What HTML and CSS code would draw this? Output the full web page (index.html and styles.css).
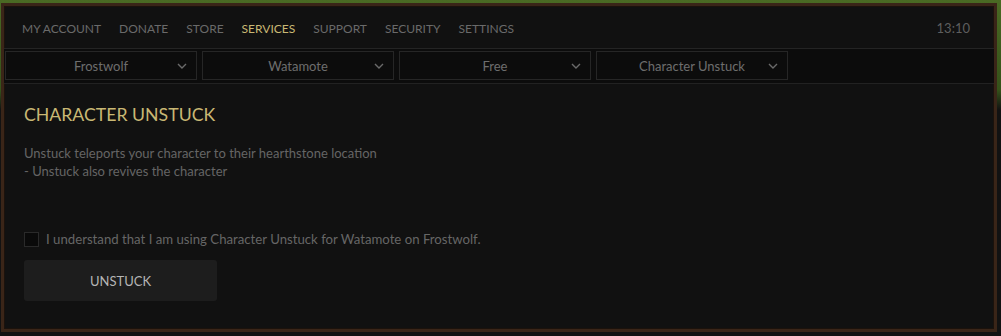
FILE: index.html
```html
<!DOCTYPE html>
<html lang="en">
<head>
    <meta charset="UTF-8">
    <title>Services - Character Unstuck</title>
    <link rel="stylesheet" href="styles.css">
</head>
<body>

<div class="frame">
    <header class="topbar">
        <nav class="menu">
            <a href="#">My Account</a>
            <a href="#">Donate</a>
            <a href="#">Store</a>
            <a href="#" class="active">Services</a>
            <a href="#">Support</a>
            <a href="#">Security</a>
            <a href="#">Settings</a>
        </nav>
        <span class="clock">13:10</span>
    </header>

    <div class="filters">
        <div class="select">Frostwolf <svg viewBox="0 0 10 6"><path d="M1 1l4 4 4-4"/></svg></div>
        <div class="select">Watamote <svg viewBox="0 0 10 6"><path d="M1 1l4 4 4-4"/></svg></div>
        <div class="select">Free <svg viewBox="0 0 10 6"><path d="M1 1l4 4 4-4"/></svg></div>
        <div class="select">Character Unstuck <svg viewBox="0 0 10 6"><path d="M1 1l4 4 4-4"/></svg></div>
    </div>

    <main class="content">
        <h2>Character Unstuck</h2>
        <p class="desc">
            Unstuck teleports your character to their hearthstone location<br>
            - Unstuck also revives the character
        </p>

        <label class="confirm">
            <span class="box"></span>
            I understand that I am using Character Unstuck for Watamote on Frostwolf.
        </label>

        <button type="button">Unstuck</button>
    </main>
</div>

</body>
</html>
```

FILE: styles.css
```css
body {
    margin: 0;
    height: 336px;
    overflow: hidden;
    font-family: 'Lato', sans-serif;
    background: linear-gradient(to bottom, #4a6a24 0, #35521a 90px, #121212 110px);
}

.frame {
    margin: 3px 4px 0 1px;
    height: 323px;
    background-color: #111111;
    border: 3px solid #3a2518;
    box-shadow: inset 0 0 0 1px #1b120c;
    display: flex;
    flex-direction: column;
}

.topbar {
    height: 43px;
    display: flex;
    align-items: center;
    justify-content: space-between;
    padding: 2px 24px 0 18px;
    box-sizing: border-box;
    border-bottom: 1px solid #242424;
}

.menu {
    display: flex;
    gap: 18px;
}

.menu a {
    color: #6a6a6a;
    text-decoration: none;
    text-transform: uppercase;
    font-size: 12px;
}

.menu a.active {
    color: #c9b874;
}

.clock {
    color: #5e5e5e;
    font-size: 13px;
}

.filters {
    display: flex;
    gap: 5px;
    padding: 2px 1px 3px;
    background-color: #0c0c0c;
    border-bottom: 1px solid #222;
}

.select {
    width: 190px;
    height: 27px;
    border: 1px solid #262626;
    display: flex;
    align-items: center;
    justify-content: center;
    position: relative;
    color: #6e6e6e;
    font-size: 13px;
}

.select svg {
    position: absolute;
    right: 9px;
    top: 11px;
    width: 10px;
    height: 6px;
    fill: none;
    stroke: #6a6a6a;
    stroke-width: 1.4;
}

.content {
    padding: 0 20px;
}

h2 {
    margin: 20px 0 0;
    color: #c9b874;
    font-weight: normal;
    font-size: 17.7px;
    text-transform: uppercase;
}

.desc {
    margin: 20px 0 0;
    color: #656565;
    font-size: 13px;
    line-height: 17.5px;
}

.confirm {
    display: flex;
    align-items: center;
    gap: 7px;
    margin-top: 51px;
    color: #666;
    font-size: 13.2px;
}

.box {
    width: 13px;
    height: 13px;
    border: 1px solid #2a2a2a;
    background-color: #0a0a0a;
}

button {
    margin-top: 13px;
    width: 193px;
    height: 41px;
    background-color: #1d1d1d;
    color: #b5b5b5;
    border: none;
    border-radius: 3px;
    font-family: 'Lato', sans-serif;
    font-size: 13px;
    text-transform: uppercase;
}
```
